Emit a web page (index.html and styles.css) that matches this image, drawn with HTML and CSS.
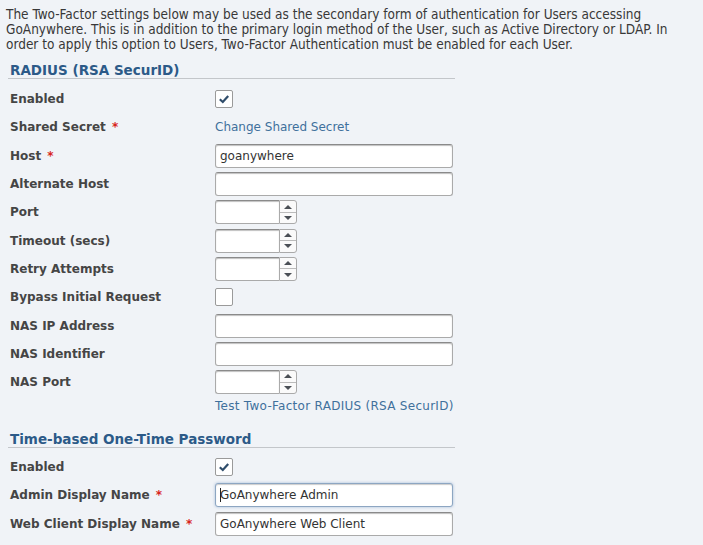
FILE: index.html
```html
<!DOCTYPE html>
<html lang="en">
<head>
<meta charset="utf-8">
<title>Two-Factor Settings</title>
<link rel="stylesheet" href="styles.css">
</head>
<body>
<p class="intro">The Two-Factor settings below may be used as the secondary form of authentication for Users accessing<br>GoAnywhere. This is in addition to the primary login method of the User, such as Active Directory or LDAP. In<br>order to apply this option to Users, Two-Factor Authentication must be enabled for each User.</p>

<h2 class="group-title">RADIUS (RSA SecurID)</h2>
<div class="form">
  <div class="label">Enabled</div>
  <div class="value"><span class="checkbox checked"><svg viewBox="0 0 12 12" width="12" height="12"><path d="M1.8 6.2 L4.8 9 L10.2 3" fill="none" stroke="#2f4d6b" stroke-width="2.2"/></svg></span></div>

  <div class="label">Shared Secret <span class="req">*</span></div>
  <div class="value"><a class="link" href="#">Change Shared Secret</a></div>

  <div class="label">Host <span class="req">*</span></div>
  <div class="value"><input class="text" type="text" value="goanywhere"></div>

  <div class="label">Alternate Host</div>
  <div class="value"><input class="text" type="text" value=""></div>

  <div class="label">Port</div>
  <div class="value"><span class="spinner"><span class="spin-input"></span><span class="spin-btns"><span class="spin-btn"><i class="tri up"></i></span><span class="spin-btn"><i class="tri down"></i></span></span></span></div>

  <div class="label">Timeout (secs)</div>
  <div class="value"><span class="spinner"><span class="spin-input"></span><span class="spin-btns"><span class="spin-btn"><i class="tri up"></i></span><span class="spin-btn"><i class="tri down"></i></span></span></span></div>

  <div class="label">Retry Attempts</div>
  <div class="value"><span class="spinner"><span class="spin-input"></span><span class="spin-btns"><span class="spin-btn"><i class="tri up"></i></span><span class="spin-btn"><i class="tri down"></i></span></span></span></div>

  <div class="label">Bypass Initial Request</div>
  <div class="value"><span class="checkbox"></span></div>

  <div class="label">NAS IP Address</div>
  <div class="value"><input class="text" type="text" value=""></div>

  <div class="label">NAS Identifier</div>
  <div class="value"><input class="text" type="text" value=""></div>

  <div class="label">NAS Port</div>
  <div class="value"><span class="spinner"><span class="spin-input"></span><span class="spin-btns"><span class="spin-btn"><i class="tri up"></i></span><span class="spin-btn"><i class="tri down"></i></span></span></span></div>
</div>
<div class="test-row"><a class="link test-link" href="#">Test Two-Factor RADIUS (RSA SecurID)</a></div>

<h2 class="group-title second">Time-based One-Time Password</h2>
<div class="form second">
  <div class="label">Enabled</div>
  <div class="value"><span class="checkbox checked"><svg viewBox="0 0 12 12" width="12" height="12"><path d="M1.8 6.2 L4.8 9 L10.2 3" fill="none" stroke="#2f4d6b" stroke-width="2.2"/></svg></span></div>

  <div class="label">Admin Display Name <span class="req">*</span></div>
  <div class="value"><span class="focus-wrap"><input class="text focused" type="text" value="GoAnywhere Admin"><span class="caret"></span></span></div>

  <div class="label">Web Client Display Name <span class="req">*</span></div>
  <div class="value"><input class="text" type="text" value="GoAnywhere Web Client"></div>
</div>
</body>
</html>
```
FILE: styles.css
```css
html, body {
  margin: 0;
  padding: 0;
  background: #f0f3f7;
}
body {
  font-family: "DejaVu Sans", Verdana, sans-serif;
  font-size: 12px;
  color: #444;
}
.intro {
  margin: 0;
  padding: 7px 0 0 6px;
  height: 45px;
  white-space: nowrap;
  overflow: hidden;
  font-family: "DejaVu Sans Condensed", "DejaVu Sans", sans-serif;
  font-size: 13.5px;
  line-height: 15px;
  color: #383838;
}
.group-title {
  margin: 10px 0 0 8px;
  width: 445px;
  padding: 1px 0 0 2px;
  font-size: 13.5px;
  line-height: 15px;
  font-weight: bold;
  color: #2c5a88;
  border-bottom: 1px solid #c3c6ca;
}
.group-title.second {
  margin-top: 15px;
}
.form {
  display: grid;
  grid-template-columns: 205px 1fr;
  grid-auto-rows: 28.3px;
  align-items: center;
  padding-left: 10px;
  margin-top: 6px;
}
.form.second {
  margin-top: 5px;
  grid-template-rows: 27.5px 28.5px 29px;
}
.label {
  font-weight: bold;
  color: #454545;
  white-space: nowrap;
}
.req {
  color: #d8241b;
  margin-left: 2px;
}
.value {
  display: flex;
  align-items: center;
}
.link {
  color: #40709c;
  text-decoration: none;
}
.test-link {
  letter-spacing: 0.28px;
}
.test-row {
  margin-left: 215px;
  height: 20px;
  line-height: 20px;
}
.text {
  box-sizing: border-box;
  width: 238px;
  height: 24px;
  margin: 0;
  padding: 0 4px;
  border: 1px solid #aaa;
  border-top-color: #8a8a8a;
  border-radius: 3px;
  background: #fff;
  box-shadow: inset 0 1px 1px rgba(0,0,0,0.25);
  font-family: "DejaVu Sans", Verdana, sans-serif;
  font-size: 12px;
  color: #333;
  outline: none;
}
.text.focused {
  border-color: #8da6c2;
  box-shadow: 0 0 3px rgba(70,120,180,0.45), inset 0 1px 1px rgba(0,0,0,0.2);
}
.focus-wrap {
  position: relative;
  display: inline-block;
}
.caret {
  position: absolute;
  left: 5px;
  top: 5px;
  width: 1px;
  height: 14px;
  background: #222;
}
.checkbox {
  box-sizing: border-box;
  width: 18px;
  height: 18px;
  border: 1px solid #9a9a9a;
  border-radius: 2px;
  background: #fff;
  display: flex;
  align-items: center;
  justify-content: center;
}
.spinner {
  display: flex;
  height: 24px;
}
.spin-input {
  box-sizing: border-box;
  width: 64px;
  height: 24px;
  border: 1px solid #aaa;
  border-top-color: #8a8a8a;
  border-right: none;
  border-radius: 3px 0 0 3px;
  background: #fff;
  box-shadow: inset 0 1px 1px rgba(0,0,0,0.25);
}
.spin-btns {
  box-sizing: border-box;
  width: 18px;
  height: 24px;
  display: flex;
  flex-direction: column;
  border: 1px solid #aaa;
  border-radius: 0 3px 3px 0;
  background: #fafafa;
}
.spin-btn {
  flex: 1;
  display: flex;
  align-items: center;
  justify-content: center;
}
.spin-btn + .spin-btn {
  border-top: 1px solid #bbb;
}
.tri {
  width: 0;
  height: 0;
  border-left: 4px solid transparent;
  border-right: 4px solid transparent;
}
.tri.up {
  border-bottom: 4px solid #4a4f55;
}
.tri.down {
  border-top: 4px solid #4a4f55;
}
```
